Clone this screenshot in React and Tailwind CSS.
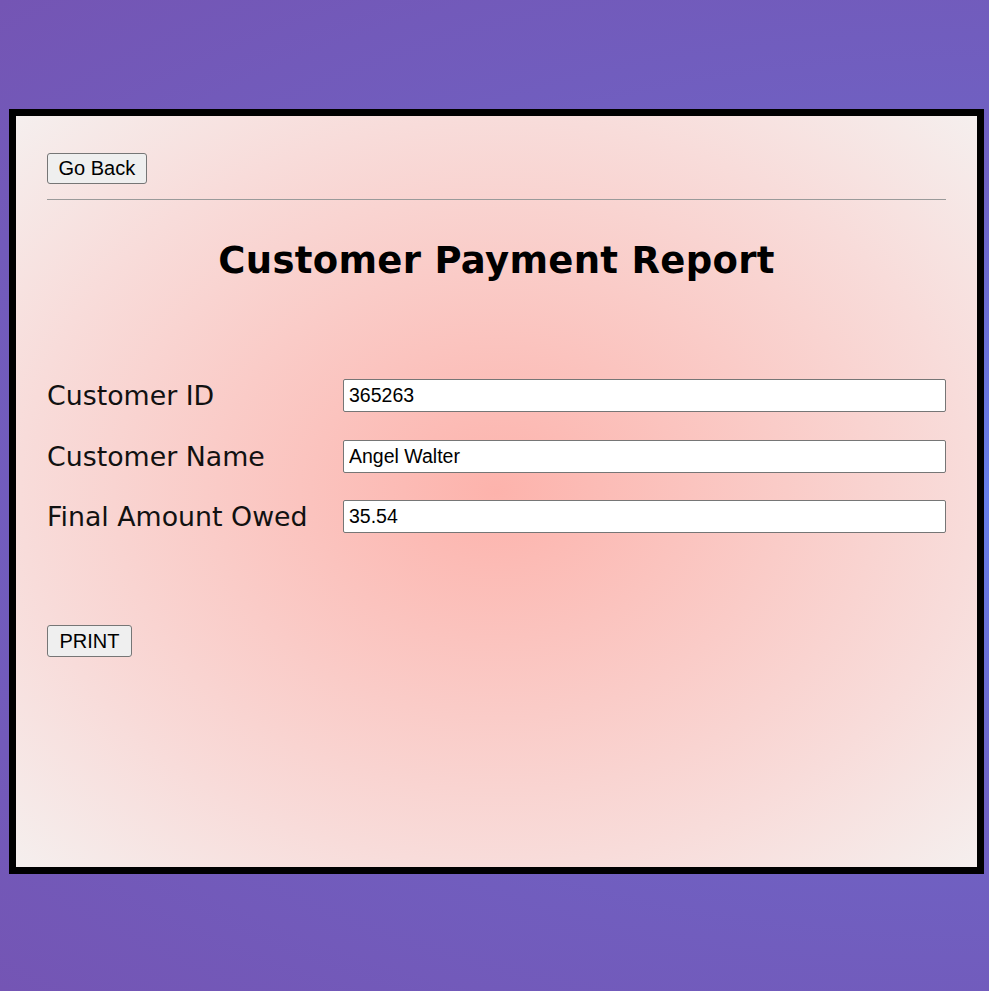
export default function App() {
    const rows = [
        { label: 'Customer ID', value: '365263' },
        { label: 'Customer Name', value: 'Angel Walter' },
        { label: 'Final Amount Owed', value: '35.54' },
    ];

    return (
        <div className="w-full h-[991px] pt-[109px] px-[9px] bg-[radial-gradient(ellipse_at_right,#667eea_0%,#6f62c4_45%,#7455b4_100%)]">
            {/* report card */}
            <div className="w-[975px] h-[765px] border-[7px] border-black pt-[37px] px-[31px] bg-[radial-gradient(ellipse_at_center,#fdb3ac_0%,#f8dcda_70%,#f5efee_100%)]">
                <button className="h-[31px] px-[10.5px] text-[20px] leading-[23px] font-['Liberation_Sans',Arial,sans-serif] text-black bg-[#efefef] border border-[#767676] rounded-[3px]">
                    Go Back
                </button>
                <hr className="mt-[15px] h-0 border-0 border-t border-[#9a9a9a]" />

                <h1 className="mt-[39px] text-center text-[37px] leading-[44px] font-bold tracking-[0.3px] text-black font-['DejaVu_Sans',Verdana,sans-serif]">
                    Customer Payment Report
                </h1>

                <div className="mt-[96px] flex flex-col gap-[27.5px]">
                    {rows.map((r) => (
                        <div key={r.label} className="flex items-center h-[33px]">
                            <label className="w-[296px] shrink-0 text-[26.8px] leading-[33px] text-[#111] font-['DejaVu_Sans',Verdana,sans-serif]">
                                {r.label}
                            </label>
                            <input
                                readOnly
                                value={r.value}
                                className="flex-1 h-[33px] px-[5px] text-[19.5px] text-black bg-white border border-[#767676] rounded-[2px] font-['Liberation_Sans',Arial,sans-serif] outline-none"
                            />
                        </div>
                    ))}
                </div>

                <button className="mt-[92px] h-[32px] px-[11.5px] text-[20px] leading-[23px] font-['Liberation_Sans',Arial,sans-serif] text-black bg-[#efefef] border border-[#767676] rounded-[3px]">
                    PRINT
                </button>
            </div>
        </div>
    );
}
